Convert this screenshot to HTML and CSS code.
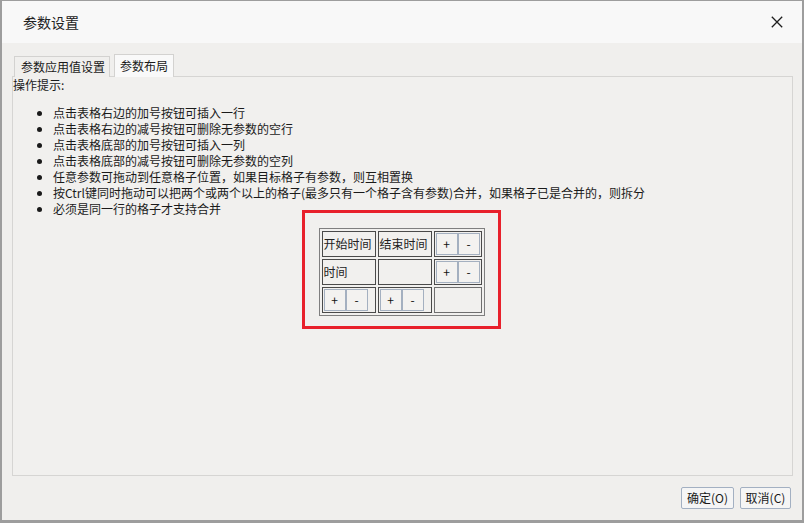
FILE: index.html
```html
<!DOCTYPE html>
<html lang="zh-CN">
<head>
<meta charset="utf-8">
<title>参数设置</title>
<link rel="stylesheet" href="styles.css">
</head>
<body>
<div class="dialog">
  <div class="titlebar">
    <span class="title">参数设置</span>
    <span class="close" aria-label="关闭">
      <svg width="12" height="12" viewBox="0 0 12 12"><path d="M0.8 0.8 L11.2 11.2 M11.2 0.8 L0.8 11.2" stroke="#1e1e1e" stroke-width="1.3" fill="none"/></svg>
    </span>
  </div>
  <div class="body">
    <div class="tabs">
      <div class="tab">参数应用值设置</div>
      <div class="tab tab-active">参数布局</div>
    </div>
    <div class="panel">
      <div class="hint">操作提示:</div>
      <ul class="tips">
        <li>点击表格右边的加号按钮可插入一行</li>
        <li>点击表格右边的减号按钮可删除无参数的空行</li>
        <li>点击表格底部的加号按钮可插入一列</li>
        <li>点击表格底部的减号按钮可删除无参数的空列</li>
        <li>任意参数可拖动到任意格子位置，如果目标格子有参数，则互相置换</li>
        <li>按Ctrl键同时拖动可以把两个或两个以上的格子(最多只有一个格子含有参数)合并，如果格子已是合并的，则拆分</li>
        <li>必须是同一行的格子才支持合并</li>
      </ul>
      <div class="layout-grid">
        <div class="cell cell-wide">开始时间</div>
        <div class="cell cell-wide">结束时间</div>
        <div class="cell cell-ctrl"><span class="mini">+</span><span class="mini">-</span></div>
        <div class="cell cell-wide">时间</div>
        <div class="cell cell-wide"></div>
        <div class="cell cell-ctrl"><span class="mini">+</span><span class="mini">-</span></div>
        <div class="cell cell-wide cell-ctrl"><span class="mini">+</span><span class="mini">-</span></div>
        <div class="cell cell-wide cell-ctrl"><span class="mini">+</span><span class="mini">-</span></div>
        <div class="cell cell-light"></div>
      </div>
      <div class="highlight"></div>
    </div>
    <div class="actions">
      <button class="btn btn-ok">确定(O)</button>
      <button class="btn btn-cancel">取消(C)</button>
    </div>
  </div>
</div>
</body>
</html>
```
FILE: styles.css
```css
* { box-sizing: border-box; }
html, body { margin: 0; padding: 0; }
body {
  background: #9d9d9d;
  width: 804px;
  height: 523px;
  overflow: hidden;
  font-family: "Noto Sans CJK SC", "Noto Sans", sans-serif;
  font-size: 12px;
  color: #1a1a1a;
}
.dialog {
  margin: 1px 0 0 2px;
  width: 800px;
  height: 519px;
  background: #f0efed;
  display: flex;
  flex-direction: column;
}
.titlebar {
  height: 42px;
  flex: none;
  background: #f8f8f8;
  display: flex;
  align-items: center;
  justify-content: space-between;
  padding: 0 19px 0 21px;
}
.title {
  font-size: 14px;
  line-height: 16px;
  color: #222;
  margin-top: -1px;
}
.close {
  display: flex;
  width: 12px;
  height: 12px;
  margin-top: -1px;
}
.body {
  flex: 1;
  display: flex;
  flex-direction: column;
  padding: 11px 10px 0 10px;
}
.tabs {
  display: flex;
  align-items: flex-end;
  gap: 4px;
  padding-left: 2px;
  height: 23px;
  margin-bottom: -1px;
  position: relative;
  z-index: 1;
}
.tab {
  height: 21px;
  border: 1px solid #d3d2d0;
  border-bottom: none;
  padding: 0 6px;
  line-height: 19px;
  background: #f0efed;
  white-space: nowrap;
  width: 96px;
  text-align: center;
}
.tab-active {
  height: 23px;
  width: 60px;
  background: #f9f9f9;
  line-height: 21px;
  padding: 0 4px;
}
.panel {
  position: relative;
  width: 781px;
  height: 400px;
  border: 1px solid #d6d5d3;
  background: #f1f0ee;
}
.hint {
  line-height: 16px;
}
.tips {
  margin: 12px 0 11px 0;
  padding-left: 40px;
  line-height: 16px;
}
.layout-grid {
  display: grid;
  grid-template-columns: 54px 54px 48px;
  grid-auto-rows: 26px;
  gap: 2px;
  padding: 2px;
  border: 1px solid #7f7f7f;
  width: 166px;
  margin: 0 auto;
  position: relative;
  left: -1px;
}
.cell {
  border: 1px solid #4a4a4a;
  padding: 1px;
  display: flex;
  align-items: center;
  line-height: 16px;
  white-space: nowrap;
  overflow: hidden;
  color: #222;
}
.cell-light { border-color: #6f6f6f; }
.cell-ctrl { align-items: stretch; }
.mini {
  width: 22px;
  height: 22px;
  border: 1px solid #a4b0c0;
  background: #f3f2f0;
  display: flex;
  align-items: center;
  justify-content: center;
  font-size: 12px;
  line-height: 12px;
  color: #111;
}
.highlight {
  position: absolute;
  left: 289px;
  top: 133px;
  width: 199px;
  height: 119px;
  border: 3px solid #e8202b;
  pointer-events: none;
}
.actions {
  display: flex;
  justify-content: flex-end;
  gap: 6px;
  margin-top: 11px;
  padding-right: 1px;
}
.btn {
  height: 22px;
  padding: 0;
  border: 1px solid #a3b0c2;
  border-radius: 2px;
  background: #f5f5f5;
  font-family: "Noto Sans CJK SC", "Noto Sans", sans-serif;
  font-size: 12px;
  line-height: 18px;
  color: #1a1a1a;
  text-align: center;
}
.btn-ok { width: 53px; }
.btn-cancel { width: 51px; }
```
